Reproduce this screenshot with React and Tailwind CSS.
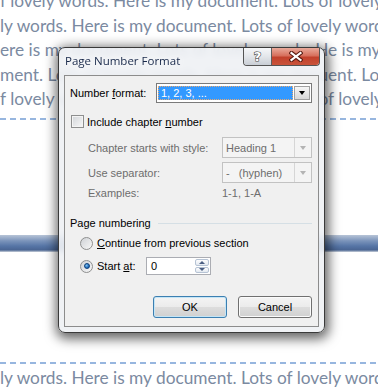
import React from "react";

// each line: text before the dialog edge (clipped to `cut` px) and the text after it
const docLines = [
  { left: "f lovely words. Here is my document. Lots of lovely words. Here is my" },
  { left: "ly words. Here is my document. Lots of lovely words. Here is my" },
  { left: "ere is my document. Lots of lovely words. Her", right: "e is my document." },
  { left: "ment. Lots of lovely words. Here is my docum", right: "ent. Lots of lovely" },
  { left: "f lovely words. Here is my document. Lots of lovely words. Here is my" },
];

const docText =
  "font-['Lato',sans-serif] text-[17.3px] leading-[24.5px] text-[#7b8aa1] whitespace-nowrap";
const ui = "font-['Liberation_Sans',Arial,sans-serif] text-[11px] leading-[14px]";

function DashedRule({ className = "" }) {
  return (
    <div
      className={`h-[2px] w-full bg-[repeating-linear-gradient(90deg,#97b6df_0_6px,transparent_6px_10px)] ${className}`}
    />
  );
}

function Arrow({ disabled }) {
  return (
    <span
      className={`block w-0 h-0 border-x-[3.5px] border-x-transparent border-t-[4px] ${
        disabled ? "border-t-[#b4b4b4]" : "border-t-black"
      }`}
    />
  );
}

function DisabledCombo({ children }) {
  return (
    <div className="flex h-[21px] w-[90px] border border-[#c2c2c2] bg-[#f4f4f4]">
      <div className="flex-1 flex items-center pl-[3px] text-[#6d6d6d] whitespace-pre">{children}</div>
      <div className="w-[17px] flex items-center justify-center border-l border-[#d6d6d6]">
        <Arrow disabled />
      </div>
    </div>
  );
}

function Radio({ checked }) {
  return (
    <span className="relative flex items-center justify-center w-[13px] h-[13px] rounded-full border border-[#8e8f8f] bg-linear-to-br from-[#cfd2d6] to-[#f8f8f8]">
      {checked && (
        <span className="w-[6px] h-[6px] rounded-full border border-[#0c3f7a] bg-[radial-gradient(circle_at_35%_35%,#7cc4f4,#1a64b5_70%)]" />
      )}
    </span>
  );
}

function WinButton({ children, focused }) {
  return (
    <div
      className={`flex items-center justify-center w-[74px] h-[22px] rounded-[3px] border bg-[linear-gradient(#f4f4f4,#ebebeb_50%,#dddddd_50%,#d0d0d0)] ${
        focused
          ? "border-[#3c7fb1] shadow-[inset_0_0_0_1px_#c4e5f6]"
          : "border-[#707070] shadow-[inset_0_0_0_1px_#fbfbfb]"
      }`}
    >
      {children}
    </div>
  );
}

function Dialog() {
  return (
    <div className="absolute left-[58px] top-[47px] w-[267px] h-[286px] flex flex-col rounded-[7px] border border-[#3a3a3a] bg-[#eef1f4]/90 backdrop-blur-[3px] shadow-[1px_3px_12px_3px_rgba(0,0,0,0.6)]">
      {/* title bar */}
      <div className="h-[27px] flex items-start">
        <span className="ml-[6px] mt-[5px] font-['Open_Sans',sans-serif] text-[11.5px] leading-[16px] text-[#19294a] [text-shadow:0_0_6px_#fff]">
          Page Number Format
        </span>
        <div className="ml-auto mr-[4px] flex h-[18px] rounded-b-[4px] border-x border-b border-[#545454] overflow-hidden">
          <div className="w-[28px] flex items-center justify-center border-r border-[#5e5e5e] bg-linear-to-b from-[#f6f7f9] via-[#e3e6ea] to-[#c9ced5]">
            <span className="font-['DejaVu_Sans',sans-serif] font-bold text-[13px] leading-none text-white [-webkit-text-stroke:1.2px_#4a4a4a] [paint-order:stroke_fill]">
              ?
            </span>
          </div>
          <div className="w-[47px] flex items-center justify-center bg-[linear-gradient(#e9aa9b,#d7705d_45%,#c2412c_55%,#c9543b)]">
            <svg width="14" height="11" viewBox="0 0 14 11">
              <path d="M2.5 2 L11.5 9 M11.5 2 L2.5 9" stroke="#5a1c12" strokeWidth="4.2" strokeLinecap="square" />
              <path d="M2.5 2 L11.5 9 M11.5 2 L2.5 9" stroke="#fff" strokeWidth="2.2" strokeLinecap="square" />
            </svg>
          </div>
        </div>
      </div>

      {/* client area */}
      <div className={`mx-[5px] mb-[5px] flex-1 flex flex-col border border-[#8c8c8c] bg-[#f0f0f0] pl-[5px] pr-[6px] text-black ${ui}`}>
        <div className="mt-[7px] flex items-center h-[20px]">
          <span className="w-[86px]">
            Number <span className="underline">f</span>ormat:
          </span>
          <div className="flex h-[20px] w-[156px] border border-[#7a7a7a] bg-white py-[2px] pl-[1px] pr-[1px]">
            <div className="flex-1 flex items-center pl-[2px] bg-[#3399ff] border border-dotted border-[#e8a870] text-white">
              1, 2, 3, ...
            </div>
            <div className="ml-[1px] w-[16px] flex items-center justify-center border border-[#a0a0a0] bg-linear-to-b from-[#f6f6f6] to-[#d8d8d8]">
              <Arrow />
            </div>
          </div>
        </div>

        <div className="mt-[12px] flex items-center h-[13px]">
          <span className="ml-[1px] w-[13px] h-[13px] border border-[#8e8f8f] bg-linear-to-br from-[#d2d5d9] to-[#f8f8f8] shadow-[inset_0_0_0_1px_#f4f4f4]" />
          <span className="ml-[3px]">
            Include chapter <span className="underline">n</span>umber
          </span>
        </div>

        <div className="mt-[9px] ml-[18px] flex items-center text-[#6d6d6d]">
          <span className="w-[134px]">Chapter starts with style:</span>
          <DisabledCombo>Heading 1</DisabledCombo>
        </div>

        <div className="mt-[4px] ml-[18px] flex items-center text-[#6d6d6d]">
          <span className="w-[134px]">Use separator:</span>
          <DisabledCombo>{"-   (hyphen)"}</DisabledCombo>
        </div>

        <div className="mt-[3px] ml-[18px] flex items-center text-[#6d6d6d]">
          <span className="w-[134px]">Examples:</span>
          <span>1-1, 1-A</span>
        </div>

        <div className="mt-[16px] flex items-center">
          <span>Page numbering</span>
          <span className="ml-[7px] flex-1 h-px bg-[#d5dfe5]" />
        </div>

        <div className="mt-[6px] ml-[10px] flex items-center h-[14px]">
          <Radio />
          <span className="ml-[4px]">
            <span className="underline">C</span>ontinue from previous section
          </span>
        </div>

        <div className="mt-[7px] ml-[10px] flex items-center h-[18px]">
          <Radio checked />
          <span className="ml-[4px] w-[49px]">
            Start <span className="underline">a</span>t:
          </span>
          <div className="flex h-[18px] w-[65px] border border-[#abadb3] bg-white">
            <span className="flex-1 pl-[4px] flex items-center">0</span>
            <div className="flex flex-col w-[15px] py-[1px] pr-[1px] gap-px">
              <div className="flex-1 flex items-center justify-center rounded-[2px] border border-[#b6c3d4] bg-linear-to-b from-[#fdfdfe] to-[#e3e9f0]">
                <span className="block w-0 h-0 border-x-[3px] border-x-transparent border-b-[3px] border-b-[#4a5e82]" />
              </div>
              <div className="flex-1 flex items-center justify-center rounded-[2px] border border-[#b6c3d4] bg-linear-to-b from-[#fdfdfe] to-[#e3e9f0]">
                <span className="block w-0 h-0 border-x-[3px] border-x-transparent border-t-[3px] border-t-[#4a5e82]" />
              </div>
            </div>
          </div>
        </div>

        <div className="mt-[21px] flex justify-end gap-[11px]">
          <WinButton focused>OK</WinButton>
          <WinButton>Cancel</WinButton>
        </div>
      </div>
    </div>
  );
}

export default function App() {
  return (
    <div className="relative w-[378px] h-[392px] overflow-hidden bg-white">
      <div className="flex flex-col">
        <div className={`-mt-[11px] ${docText}`}>
          {docLines.map((line, i) =>
            line.right ? (
              <p key={i} className="flex">
                <span className="w-[328px] shrink-0 overflow-hidden">{line.left}</span>
                <span>{line.right}</span>
              </p>
            ) : (
              <p key={i}>{line.left}</p>
            )
          )}
        </div>
        <DashedRule className="mt-[6px]" />
        <div className="mt-[115px] h-[17px] bg-[linear-gradient(#b7c4d7,#7a93ba_35%,#5675a6_65%,#4a6593_88%,#c9d0da)]" />
        <DashedRule className="mt-[110px]" />
        <p className={`mt-[2px] ${docText}`}>ly words. Here is my document. Lots of lovely words.</p>
      </div>
      <Dialog />
    </div>
  );
}
